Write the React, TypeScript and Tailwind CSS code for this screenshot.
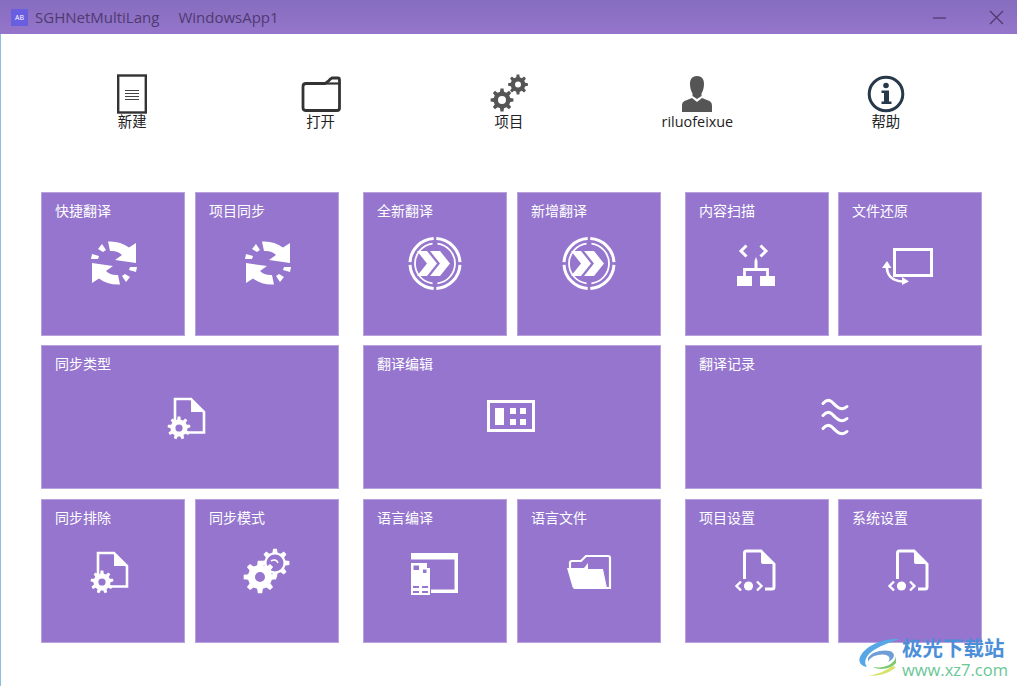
import React from "react";

const gearPath = (cx: number, cy: number, r: number, teeth: number, hole: number) => {
  const inner = r * 0.74;
  const step = (Math.PI * 2) / teeth;
  const pts: string[] = [];
  for (let i = 0; i < teeth; i++) {
    const a = i * step - Math.PI / 2;
    const p = (rad: number, off: number) =>
      `${(cx + rad * Math.cos(a + off * step)).toFixed(2)} ${(cy + rad * Math.sin(a + off * step)).toFixed(2)}`;
    pts.push(p(r, -0.17), p(r, 0.17), p(inner, 0.3), p(inner, 0.7));
  }
  const h = `M${cx - hole} ${cy}a${hole} ${hole} 0 1 0 ${hole * 2} 0a${hole} ${hole} 0 1 0 ${-hole * 2} 0Z`;
  return `M${pts.join("L")}Z${h}`;
};

const Gear = ({ cx, cy, r, teeth = 8, hole, fill = "#fff" }: { cx: number; cy: number; r: number; teeth?: number; hole: number; fill?: string }) => (
  <path d={gearPath(cx, cy, r, teeth, hole)} fill={fill} fillRule="evenodd" />
);

const Frame = ({ children }: { children: React.ReactNode }) => (
  <svg width="64" height="64" viewBox="0 0 64 64" fill="none">
    {children}
  </svg>
);

const SyncHalf = () => (
  <g>
    <path d="M17 0.5C25 0 32 2 38 6.5L45 2V22L24 19L31 14C28 11 24 9.5 19 10Z" />
    <path d="M7 8L11 3L15 9L12 11Z" />
    <path d="M0 18L1 13L8 15L7 18Z" />
  </g>
);

const SyncIcon = () => (
  <Frame>
    <g transform="translate(10 9)" fill="#fff">
      <SyncHalf />
      <g transform="rotate(180 23 22)">
        <SyncHalf />
      </g>
    </g>
  </Frame>
);

const arc = (r: number, a0: number, a1: number, cx = 32, cy = 31.5) => {
  const t = (a: number) => (a * Math.PI) / 180;
  return `M${(cx + r * Math.cos(t(a0))).toFixed(2)} ${(cy + r * Math.sin(t(a0))).toFixed(2)}A${r} ${r} 0 0 1 ${(cx + r * Math.cos(t(a1))).toFixed(2)} ${(cy + r * Math.sin(t(a1))).toFixed(2)}`;
};

const ChevronIcon = () => (
  <Frame>
    <g stroke="#fff" fill="none">
      <g strokeWidth="3">
        <path d={arc(25, 3, 87)} />
        <path d={arc(25, 93, 177)} />
        <path d={arc(25, 183, 267)} />
        <path d={arc(25, 273, 357)} />
      </g>
      <g strokeWidth="1.8">
        <path d={arc(20, -83, 83)} />
        <path d={arc(20, 97, 263)} />
      </g>
    </g>
    <path d="M14 19H24L34 31.5L24 44H14L24 31.5Z" fill="#fff" />
    <path d="M27 19H37L47 31.5L37 44H27L37 31.5Z" fill="#fff" />
  </Frame>
);

const TreeIcon = () => (
  <Frame>
    <path d="M21.5 13.5L16 19L21.5 24.5M35.5 13.5L41 19L35.5 24.5" stroke="#fff" strokeWidth="3" />
    <path d="M19.5 46V37.5H42.5V46" stroke="#fff" strokeWidth="2.8" />
    <path d="M29.5 29L31 25L32.5 29V37H29.5Z" fill="#fff" />
    <rect x="12" y="44" width="15" height="10" fill="#fff" />
    <rect x="35" y="44" width="15" height="10" fill="#fff" />
  </Frame>
);

const RestoreIcon = () => (
  <Frame>
    <rect x="16.5" y="17.5" width="37" height="26" stroke="#fff" strokeWidth="3" />
    <path d="M9 33C8 43 14 49 25 49.5" stroke="#fff" strokeWidth="2.6" />
    <path d="M4 36L9 29L13.5 36Z" fill="#fff" />
    <path d="M24 45L31 49.5L24 53Z" fill="#fff" />
  </Frame>
);

const DocGear = () => (
  <Frame>
    <path d="M17 37V14H33L46 27V47.5H28" stroke="#fff" strokeWidth="2.6" />
    <path d="M33 13L47 27H33Z" fill="#fff" />
    <Gear cx={21} cy={43} r={11.5} teeth={9} hole={3.6} />
  </Frame>
);

const GridIcon = () => (
  <Frame>
    <rect x="8.5" y="16.5" width="45" height="29" stroke="#fff" strokeWidth="3" />
    <rect x="15" y="23" width="9" height="17" fill="#fff" />
    <rect x="30" y="23" width="6" height="6" fill="#fff" />
    <rect x="40" y="23" width="6" height="6" fill="#fff" />
    <rect x="30" y="34" width="6" height="6" fill="#fff" />
    <rect x="40" y="34" width="6" height="6" fill="#fff" />
  </Frame>
);

const WavesIcon = () => (
  <Frame>
    <g stroke="#fff" strokeWidth="3" strokeLinecap="round">
      <path d="M21 18.5C24 15 27 14.5 30 17C34 21 39 27 45 21.5" />
      <path d="M21 30.5C24 27 27 26.5 30 29C34 33 39 39 45 33.5" />
      <path d="M21 43.5C24 40 27 39.5 30 42C34 46 39 52 45 46.5" />
    </g>
  </Frame>
);

const GearsIcon = () => (
  <Frame>
    <Gear cx={25} cy={38} r={16.5} teeth={8} hole={5} />
    <path d={gearPath(40, 24, 14.5, 8, 8.5)} fill="#fff" fillRule="evenodd" />
    <path d="M36 22C39 20 42 21 43 24" stroke="#fff" strokeWidth="1.6" />
  </Frame>
);

const LangIcon = () => (
  <Frame>
    <path d="M8 14H55V54H28V50.5H51.5V20.5H8Z" fill="#fff" />
    <path fillRule="evenodd" clipRule="evenodd" fill="#fff" d="M8 24H24V29H27V56H8ZM10.5 26.5V31H16V26.5ZM20 30.5V34H23.5V30.5ZM10 47V49H16V47ZM19 47V49H25V47ZM10 52V54H16V52ZM19 52V54H25V52Z" />
  </Frame>
);

const FolderIcon = () => (
  <Frame>
    <path d="M13 31V24Q13 22 15 22H24L29 17H51Q53 17 53 19V49H49" stroke="#fff" strokeWidth="2.2" />
    <path d="M10 29H27L31 24V30H46L50 49Q50 50 48 50H18Q16 50 15.5 48Z" fill="#fff" />
  </Frame>
);

const FileCodeIcon = () => (
  <Frame>
    <path d="M19.5 40V14Q19.5 12 21.5 12H36L49 25V48Q49 50 47 50H40" stroke="#fff" strokeWidth="3" />
    <path d="M36 11L50 25H38Q36 25 36 23Z" fill="#fff" />
    <circle cx="23.5" cy="47" r="4.6" fill="#fff" />
    <path d="M16 42.5L11.5 47L16 51.5M32 42.5L36.5 47L32 51.5" stroke="#fff" strokeWidth="2.4" />
  </Frame>
);

const Tile = ({ title, icon, wide = false }: { title: string; icon: React.ReactNode; wide?: boolean }) => (
  <div className={`${wide ? "col-span-2" : ""} h-[144px] bg-[#9575cd] border border-[#b8a2dd] text-white`}>
    <div className="h-[29px] pt-[8px] pl-[13px] text-[14px] leading-[20px]">{title}</div>
    <div className="h-[84px] flex items-center justify-center">{icon}</div>
  </div>
);

const Group = ({ children, narrow = false }: { children: React.ReactNode; narrow?: boolean }) => (
  <div className={`grid grid-cols-[144px_144px] gap-y-[9.4px] ${narrow ? "w-[297px] gap-x-[9px]" : "w-[298px] gap-x-[10px]"}`}>{children}</div>
);

const ToolItem = ({ label, children }: { label: string; children: React.ReactNode }) => (
  <div className="flex flex-col items-center">
    <div className="h-[40px] w-[44px] flex items-center justify-center">{children}</div>
    <div className="-mt-px text-[14.4px] leading-[18px] text-[#222]">{label}</div>
  </div>
);

export default function App() {
  return (
    <div
      className="relative w-[1017px] h-[686px] overflow-hidden bg-white"
      style={{ fontFamily: '"Open Sans", "Noto Sans CJK SC", sans-serif' }}
    >
      <header className="h-[34px] flex items-center bg-gradient-to-b from-[#866dbe] to-[#9575cb] pl-[11px] text-[15px] text-[#4f3a72]">
        <div className="w-[17px] h-[17px] bg-[#6a5ee0] flex items-center justify-center text-[7px] leading-none text-white">AB</div>
        <span className="ml-[7px]">SGHNetMultiLang</span>
        <span className="ml-[19px]">WindowsApp1</span>
        <div className="ml-auto flex items-center pr-[13px] gap-[42px]">
          <svg width="15" height="15" viewBox="0 0 15 15"><path d="M1 8H14" stroke="#4f3a72" strokeWidth="1.3" /></svg>
          <svg width="15" height="15" viewBox="0 0 15 15"><path d="M1 1L14 14M14 1L1 14" stroke="#4f3a72" strokeWidth="1.3" /></svg>
        </div>
      </header>

      <main className="h-[652px] border-l border-[#8dbfdc]">
        <section className="grid grid-cols-5 pl-[37px] pr-[37px] pt-[40px]">
          <ToolItem label="新建">
            <svg width="32" height="40" viewBox="0 0 32 40" fill="none">
              <rect x="2.2" y="1.5" width="27.6" height="37" fill="#fff" stroke="#333" strokeWidth="2.4" />
              <path d="M9 16.5H23M9 19.5H23M9 22.5H23M9 25.5H23" stroke="#444" strokeWidth="1.2" />
            </svg>
          </ToolItem>
          <ToolItem label="打开">
            <svg width="40" height="40" viewBox="0 0 40 40" fill="none">
              <path d="M2 12.5Q2 9.5 5 9.5H24L28 6.5Q29 5 31 4H37Q38.5 4 38.5 6V34Q38.5 36.5 36 36.5H5Q2 36.5 2 34Z" stroke="#333" strokeWidth="2.8" />
              <path d="M24 9.5H38" stroke="#333" strokeWidth="2.2" />
            </svg>
          </ToolItem>
          <ToolItem label="项目">
            <svg width="40" height="40" viewBox="0 0 40 40">
              <Gear cx={13} cy={26} r={11.5} teeth={8} hole={4} fill="#555" />
              <Gear cx={29} cy={10.5} r={10} teeth={8} hole={3} fill="#555" />
            </svg>
          </ToolItem>
          <ToolItem label="riluofeixue">
            <svg width="32" height="38" viewBox="0 0 32 38">
              <path d="M16 1C10.5 1 9 5 9 9C9 13 10 16 11.5 18.5V21L16 24L20.5 21V18.5C22 16 23 13 23 9C23 5 21.5 1 16 1Z" fill="#555" />
              <path d="M1 37V31C1 27 3 26 6 25L11 23L16 27L21 23L26 25C29 26 31 27 31 31V37Z" fill="#555" />
            </svg>
          </ToolItem>
          <ToolItem label="帮助">
            <svg width="38" height="38" viewBox="0 0 38 38" fill="none">
              <circle cx="19" cy="19" r="16.8" stroke="#26384a" strokeWidth="3" />
              <circle cx="19" cy="10.5" r="2.8" fill="#26384a" />
              <path d="M14.5 15.5H22V26.5H24.5V29H14.5V26.5H17V18H14.5Z" fill="#26384a" />
            </svg>
          </ToolItem>
        </section>

        <section className="mt-[61px] pl-[40px] flex gap-[24px]">
          <Group>
            <Tile title="快捷翻译" icon={<SyncIcon />} />
            <Tile title="项目同步" icon={<SyncIcon />} />
            <Tile wide title="同步类型" icon={<DocGear />} />
            <Tile title="同步排除" icon={<DocGear />} />
            <Tile title="同步模式" icon={<GearsIcon />} />
          </Group>
          <Group>
            <Tile title="全新翻译" icon={<ChevronIcon />} />
            <Tile title="新增翻译" icon={<ChevronIcon />} />
            <Tile wide title="翻译编辑" icon={<GridIcon />} />
            <Tile title="语言编译" icon={<LangIcon />} />
            <Tile title="语言文件" icon={<FolderIcon />} />
          </Group>
          <Group narrow>
            <Tile title="内容扫描" icon={<TreeIcon />} />
            <Tile title="文件还原" icon={<RestoreIcon />} />
            <Tile wide title="翻译记录" icon={<WavesIcon />} />
            <Tile title="项目设置" icon={<FileCodeIcon />} />
            <Tile title="系统设置" icon={<FileCodeIcon />} />
          </Group>
        </section>
      </main>

      <div className="absolute left-[858px] top-[637px] w-[159px] h-[44px] flex">
        <svg width="44" height="40" viewBox="0 0 44 40" fill="none">
          <path d="M42 2C24 1 7 9 2 20C0 25 3 29 9 30C5 25 8 18 16 13C24 8 33 5 42 2Z" fill="#56a7e6" />
          <path d="M10 21C13 15 24 12 32 14C38 16 37 22 30 25C35 19 27 16 20 18C15 19 12 21 10 25Z" fill="#6f9ed6" />
          <path d="M38 19C37 27 27 32 15 30C20 33 32 33 38 26Z" fill="#7cc96f" />
          <path d="M34 29C28 34 20 37 10 39C22 39 32 36 38 30Z" fill="#d8e36a" />
        </svg>
        <div className="flex flex-col">
          <span className="text-[20.5px] leading-[22px] font-bold text-[#4c8fd8] whitespace-nowrap">极光下载站</span>
          <span className="mt-[3px] text-[16.5px] leading-[16px] text-[#69c695] whitespace-nowrap">www.xz7.com</span>
        </div>
      </div>
    </div>
  );
}
